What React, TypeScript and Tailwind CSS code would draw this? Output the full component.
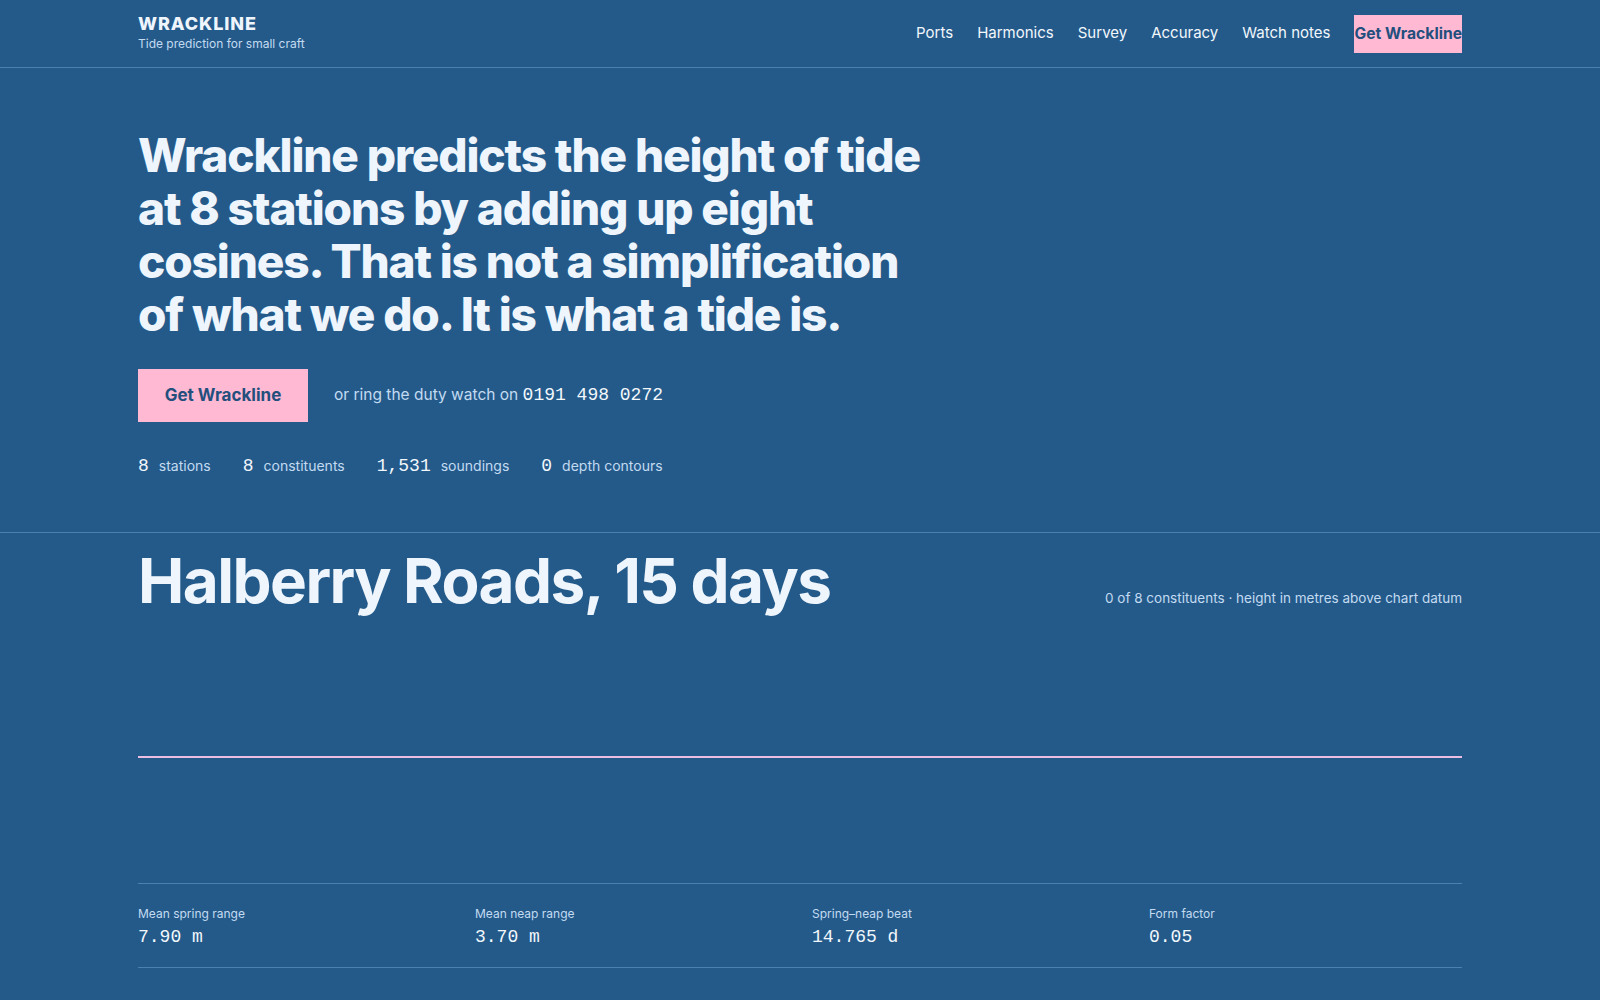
const navLinks = ["Ports", "Harmonics", "Survey", "Accuracy", "Watch notes"];

const heroStats = [
  { value: "8", label: "stations" },
  { value: "8", label: "constituents" },
  { value: "1,531", label: "soundings" },
  { value: "0", label: "depth contours" },
];

const readouts = [
  { label: "Mean spring range", value: "7.90 m" },
  { label: "Mean neap range", value: "3.70 m" },
  { label: "Spring–neap beat", value: "14.765 d" },
  { label: "Form factor", value: "0.05" },
];

const mono = "font-['Liberation_Mono',monospace]";

// no constituents switched on, so the sum of cosines is flat at datum
const TideChart = () => {
  return (
    <svg
      className="block w-full h-[271px]"
      viewBox="0 0 1324 271"
      preserveAspectRatio="none"
    >
      <line
        x1="0"
        y1="145"
        x2="1324"
        y2="145"
        stroke="#ecbde2"
        strokeWidth="2"
      />
    </svg>
  );
};

const App = () => {
  return (
    <div className="min-h-screen bg-[#245a8a] text-[#eef5fc] font-['Inter','Noto_Sans',sans-serif]">
      <header className="border-b border-[#4c80b3]">
        <div className="mx-auto w-[1324px] h-[67px] flex items-center justify-between">
          <div className="flex flex-col">
            <span className="text-[18px] leading-[20px] font-extrabold tracking-[0.05em]">
              WRACKLINE
            </span>
            <span className="text-[12px] leading-[18px] text-[#c3dbf1] mt-[1px]">
              Tide prediction for small craft
            </span>
          </div>
          <nav className="flex items-center gap-6 text-[15px]">
            {navLinks.map((l) => (
              <a key={l} href="#" className="text-[#f2f7fc]">
                {l}
              </a>
            ))}
            <a
              href="#"
              className="h-[38px] flex items-center bg-[#ffb9d3] text-[#234f7d] font-bold text-[15.7px]"
            >
              Get Wrackline
            </a>
          </nav>
        </div>
      </header>

      <section className="border-b border-[#4c80b3]">
        <div className="mx-auto w-[1324px] pt-[61px] pb-[52px]">
          <h1 className="max-w-[800px] text-[46px] leading-[53px] font-extrabold tracking-[-0.025em]">
            Wrackline predicts the height of tide at 8 stations by adding up
            eight cosines. That is not a simplification of what we do. It is
            what a tide is.
          </h1>

          <div className="mt-[28px] flex items-center gap-[26px]">
            <a
              href="#"
              className="w-[170px] h-[53px] flex items-center justify-center bg-[#ffb9d3] text-[#234f7d] font-bold text-[17px]"
            >
              Get Wrackline
            </a>
            <p className="text-[15.5px] text-[#c3dbf1]">
              or ring the duty watch on{" "}
              <span className={`${mono} text-[18px] text-[#f2f7fc]`}>
                0191 498 0272
              </span>
            </p>
          </div>

          <div className="mt-[31px] flex items-baseline gap-8">
            {heroStats.map((s) => (
              <div key={s.label} className="flex items-baseline gap-[10px]">
                <span className={`${mono} text-[18px] text-[#f2f7fc]`}>
                  {s.value}
                </span>
                <span className="text-[14px] text-[#c3dbf1]">{s.label}</span>
              </div>
            ))}
          </div>
        </div>
      </section>

      <section className="pb-8">
        <div className="mx-auto w-[1324px] pt-[17px]">
          <div className="flex items-baseline justify-between">
            <h2 className="text-[62px] leading-[62px] font-bold tracking-[-0.025em]">
              Halberry Roads, 15 days
            </h2>
            <p className="text-[13.5px] text-[#c3dbf1]">
              0 of 8 constituents · height in metres above chart datum
            </p>
          </div>

          <TideChart />

          <div className="grid grid-cols-4 gap-6 border-y border-[#4c80b3] pt-[22px] pb-[18px]">
            {readouts.map((r) => (
              <div key={r.label} className="flex flex-col gap-[3px]">
                <span className="text-[12px] leading-[16px] text-[#c3dbf1]">
                  {r.label}
                </span>
                <span className={`${mono} text-[18px] leading-[24px] text-[#f2f7fc]`}>
                  {r.value}
                </span>
              </div>
            ))}
          </div>
        </div>
      </section>
    </div>
  );
};

export default App;
